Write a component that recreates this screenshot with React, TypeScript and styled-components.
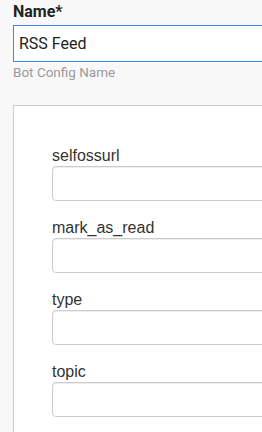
import styled, { createGlobalStyle } from "styled-components";

const GlobalStyle = createGlobalStyle`
  html, body {
    margin: 0;
    padding: 0;
    background-color: #f8f8f8;
    overflow: hidden;
  }
`;

const Page = styled.div`
  width: 420px;
  padding: 3px 0 0 13px;
  font-family: Roboto, "Liberation Sans", sans-serif;
`;

const NameLabel = styled.div`
  font-size: 16px;
  line-height: 18px;
  font-weight: 700;
  color: #222;
  margin-bottom: 4px;
`;

const NameInput = styled.input`
  box-sizing: border-box;
  display: block;
  width: 100%;
  height: 37px;
  padding: 0 5px;
  border: 1px solid #4285f4;
  background: #fff;
  font-family: Roboto, "Liberation Sans", sans-serif;
  font-size: 16px;
  color: #222;
  outline: none;
`;

const Helper = styled.div`
  font-size: 13.5px;
  line-height: 16px;
  color: #9a9a9a;
  margin-top: 2px;
`;

const Panel = styled.div`
  margin-top: 25px;
  background: #fff;
  border: 1px solid #ccc;
  padding: 40px 0 40px 38px;
  display: flex;
  flex-direction: column;
  gap: 17px;
`;

const Field = styled.div`
  display: flex;
  flex-direction: column;
`;

const FieldLabel = styled.label`
  font-family: "Liberation Sans", Arial, sans-serif;
  font-size: 16px;
  line-height: 20px;
  color: #333;
`;

const FieldInput = styled.input`
  box-sizing: border-box;
  display: block;
  width: 100%;
  height: 35px;
  border: 1px solid #ccc;
  border-radius: 4px;
  box-shadow: inset 0 1px 1px rgba(0, 0, 0, 0.075);
  background: #fff;
  padding: 6px 12px;
  font-size: 14px;
  outline: none;
`;

const fields = ["selfossurl", "mark_as_read", "type", "topic"];

export default function App() {
  return (
    <Page>
      <GlobalStyle />
      <NameLabel>Name*</NameLabel>
      <NameInput defaultValue="RSS Feed" />
      <Helper>Bot Config Name</Helper>
      <Panel>
        {fields.map((f) => (
          <Field key={f}>
            <FieldLabel>{f}</FieldLabel>
            <FieldInput />
          </Field>
        ))}
      </Panel>
    </Page>
  );
}
